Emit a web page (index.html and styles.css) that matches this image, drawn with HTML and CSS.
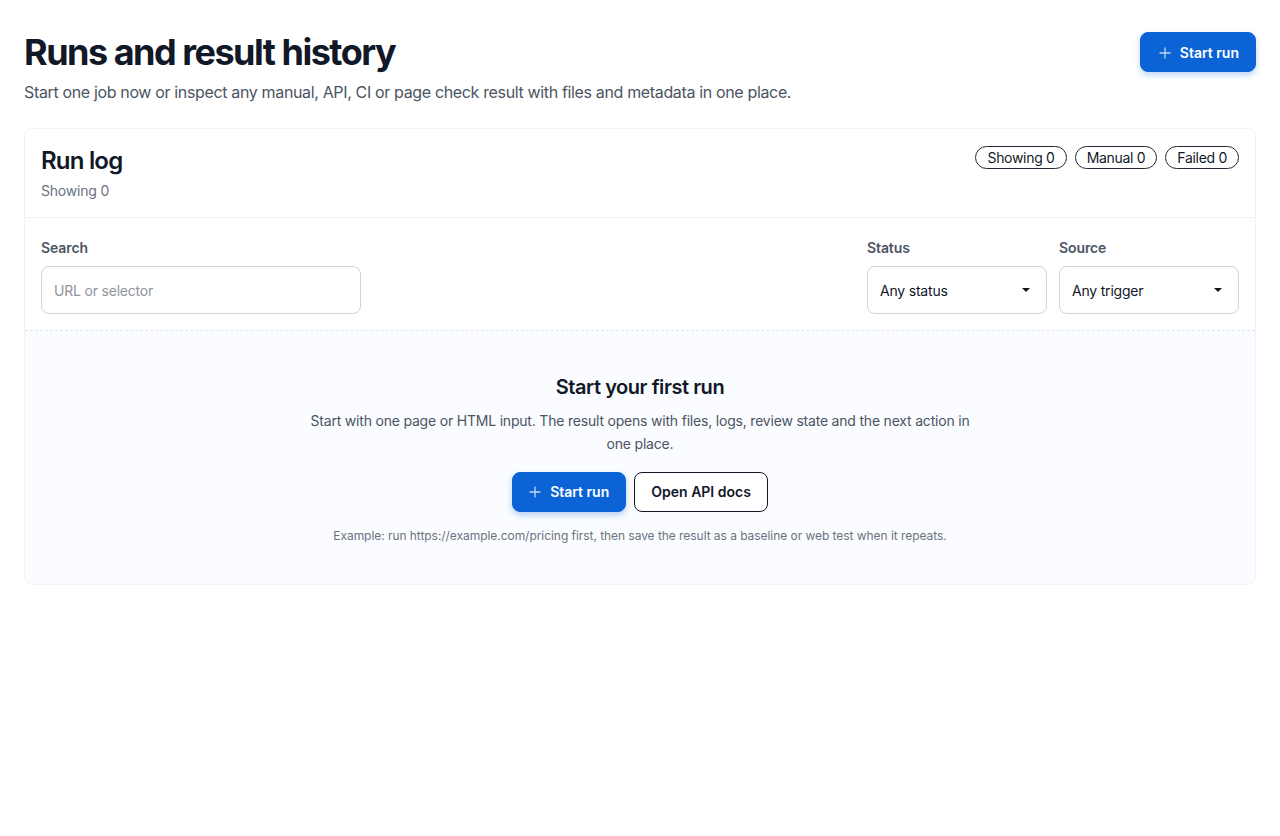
FILE: index.html
```html
<!DOCTYPE html>
<html lang="en">
<head>
    <meta charset="UTF-8">
    <title>Runs and result history</title>
    <link rel="stylesheet" href="styles.css">
</head>
<body>
<div class="page">
    <header class="page-head">
        <div class="page-title">
            <h1>Runs and result history</h1>
            <p>Start one job now or inspect any manual, API, CI or page check result with files and metadata in one place.</p>
        </div>
        <button class="btn btn-primary">
            <svg class="plus" width="12" height="12" viewBox="0 0 12 12"><path d="M6 0.5v11M0.5 6h11" stroke="currentColor" stroke-width="1.3" fill="none"/></svg>
            Start run
        </button>
    </header>

    <section class="card">
        <div class="card-head">
            <div>
                <h2>Run log</h2>
                <div class="muted">Showing 0</div>
            </div>
            <div class="pills">
                <span class="pill">Showing 0</span>
                <span class="pill">Manual 0</span>
                <span class="pill">Failed 0</span>
            </div>
        </div>

        <div class="filters">
            <label class="field field-search">
                <span class="label">Search</span>
                <input class="input" type="text" placeholder="URL or selector">
            </label>
            <div class="spacer"></div>
            <label class="field field-select">
                <span class="label">Status</span>
                <span class="select">Any status <i class="caret"></i></span>
            </label>
            <label class="field field-select">
                <span class="label">Source</span>
                <span class="select">Any trigger <i class="caret"></i></span>
            </label>
        </div>

        <div class="empty">
            <h3>Start your first run</h3>
            <p>Start with one page or HTML input. The result opens with files, logs, review state and the next action in one place.</p>
            <div class="actions">
                <button class="btn btn-primary">
                    <svg class="plus" width="12" height="12" viewBox="0 0 12 12"><path d="M6 0.5v11M0.5 6h11" stroke="currentColor" stroke-width="1.3" fill="none"/></svg>
                    Start run
                </button>
                <button class="btn btn-outline">Open API docs</button>
            </div>
            <div class="hint">Example: run https://example.com/pricing first, then save the result as a baseline or web test when it repeats.</div>
        </div>
    </section>
</div>
</body>
</html>
```

FILE: styles.css
```css
* {
    box-sizing: border-box;
}
body {
    margin: 0;
    background: #fff;
    color: #111827;
    font-family: Inter, "Noto Sans", sans-serif;
}
.page {
    padding: 32px 24px;
}
.page-head {
    display: flex;
    justify-content: space-between;
    align-items: flex-start;
    margin-bottom: 24px;
}
.page-title h1 {
    margin: 0;
    font-size: 36px;
    line-height: 40px;
    font-weight: 700;
    letter-spacing: -1.5px;
    color: #111827;
}
.page-title p {
    margin: 8px 0 0;
    font-size: 16px;
    line-height: 24px;
    letter-spacing: -0.35px;
    color: #4b5563;
}
.btn {
    display: inline-flex;
    align-items: center;
    gap: 9px;
    height: 40px;
    padding: 0 16px;
    border-radius: 8px;
    font: 600 14px/20px Inter, sans-serif;
    cursor: pointer;
}
.page-head .btn {
    padding: 1px 16px 0 18px;
}
.btn-primary {
    background: #0b63d6;
    color: #fff;
    border: 1px solid #0b63d6;
    box-shadow: 0 3px 6px rgba(11, 99, 214, 0.28);
}
.btn-primary .plus {
    color: rgba(255, 255, 255, 0.75);
}
.btn-outline {
    background: #fff;
    color: #111827;
    border: 1px solid #111827;
}
.card {
    border: 1px solid #eef2f7;
    border-radius: 8px;
    overflow: hidden;
}
.card-head {
    display: flex;
    justify-content: space-between;
    align-items: flex-start;
    padding: 16px 16px 16px;
    border-bottom: 1px solid #eef2f7;
}
.card-head h2 {
    margin: 0;
    font-size: 24px;
    line-height: 32px;
    font-weight: 600;
    letter-spacing: -0.8px;
}
.muted {
    margin-top: 4px;
    font-size: 14px;
    line-height: 20px;
    letter-spacing: -0.2px;
    color: #6b7280;
}
.pills {
    display: flex;
    gap: 8px;
    padding-top: 1px;
}
.pill {
    height: 23px;
    padding: 0 11px;
    border: 1px solid #1f2937;
    border-radius: 999px;
    font-size: 14px;
    line-height: 21px;
    letter-spacing: -0.3px;
    color: #111827;
}
.filters {
    display: flex;
    align-items: flex-end;
    gap: 12px;
    padding: 20px 16px 16px;
    border-bottom: 1px dashed #d9e5f5;
}
.spacer {
    flex: 1;
}
.field {
    display: flex;
    flex-direction: column;
    gap: 8px;
}
.field-search {
    width: 320px;
}
.field-select {
    width: 180px;
}
.label {
    font-size: 14px;
    line-height: 20px;
    font-weight: 600;
    letter-spacing: -0.1px;
    color: #4b5563;
}
.input,
.select {
    height: 48px;
    border: 1px solid #d1d5db;
    border-radius: 8px;
    padding: 0 12px;
    font: 14px Inter, sans-serif;
    letter-spacing: -0.2px;
    color: #111827;
    background: #fff;
    outline: none;
}
.input::placeholder {
    color: #8f949c;
}
.select {
    display: flex;
    align-items: center;
    justify-content: space-between;
    padding-right: 16px;
}
.caret {
    width: 0;
    height: 0;
    border-left: 4px solid transparent;
    border-right: 4px solid transparent;
    border-top: 4px solid #111827;
}
.empty {
    background: #fafcff;
    padding: 42px 16px 40px;
    text-align: center;
}
.empty h3 {
    margin: 0;
    font-size: 20px;
    line-height: 28px;
    font-weight: 600;
    letter-spacing: -0.45px;
}
.empty p {
    max-width: 672px;
    margin: 8px auto 0;
    font-size: 14px;
    line-height: 23px;
    letter-spacing: -0.2px;
    color: #4b5563;
}
.actions {
    display: flex;
    justify-content: center;
    gap: 8px;
    margin-top: 17px;
}
.hint {
    margin-top: 16px;
    font-size: 12px;
    line-height: 16px;
    letter-spacing: -0.05px;
    color: #6b7280;
}
```
